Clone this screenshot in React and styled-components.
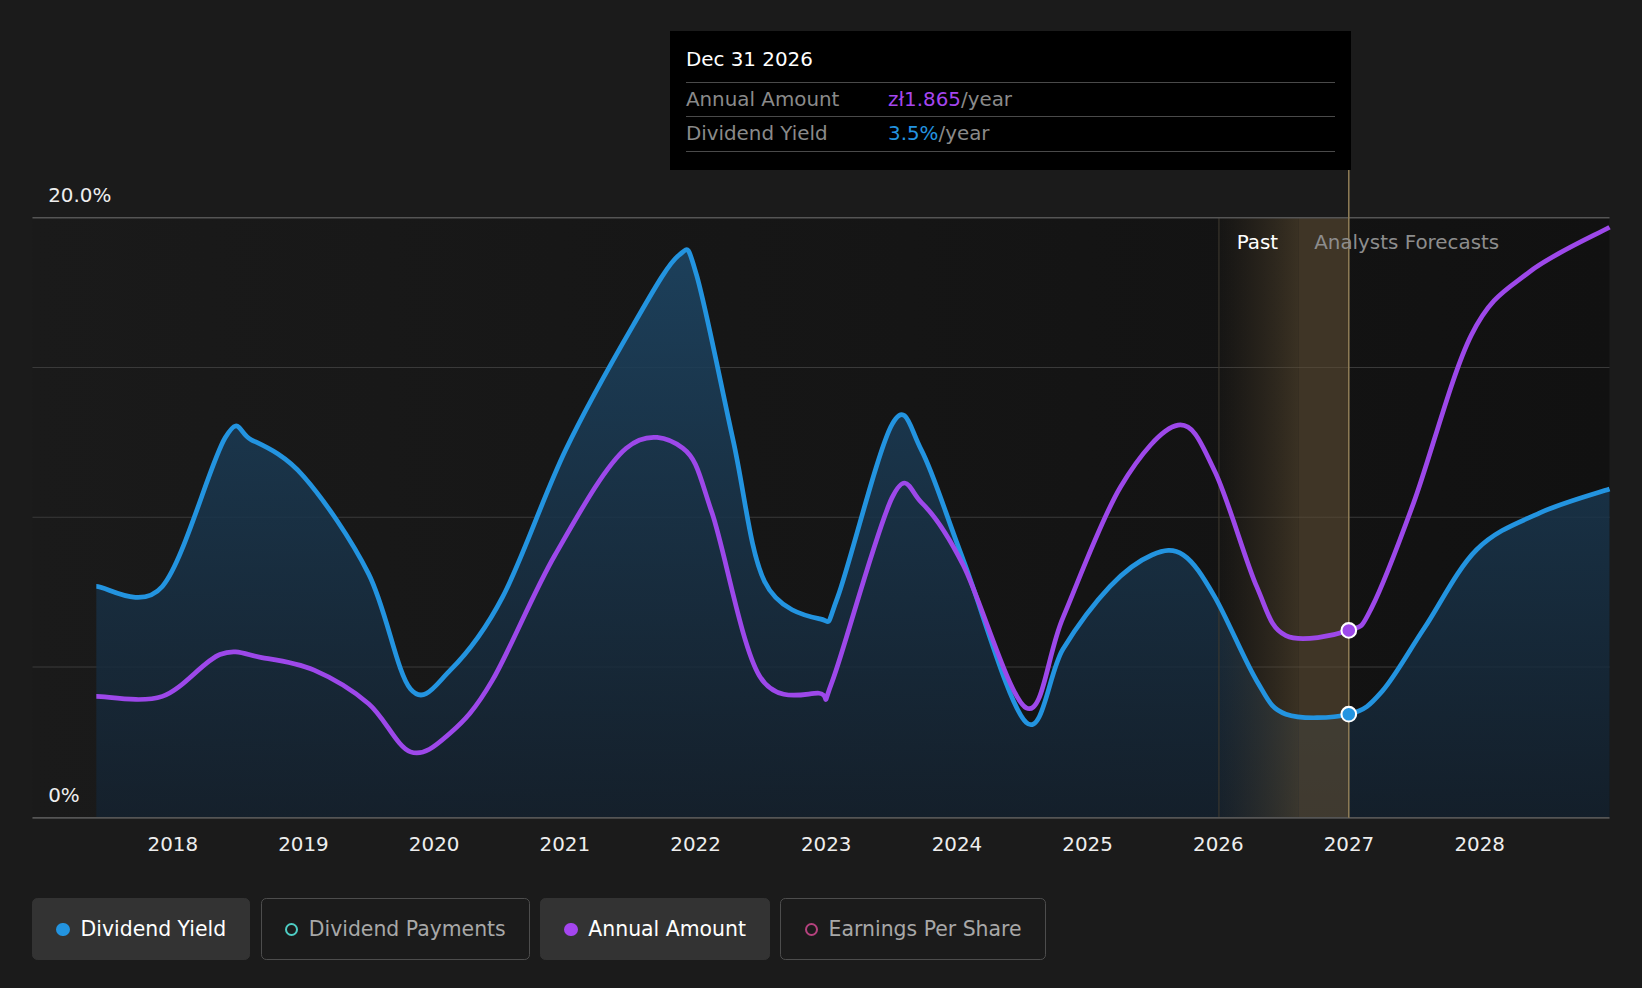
import React from "react";
import styled, { createGlobalStyle } from "styled-components";

const Global = createGlobalStyle`
  html, body { margin: 0; background: #1b1b1b; }
  body { font-family: "DejaVu Sans", "Noto Sans", sans-serif; overflow: hidden; }
`;

const Page = styled.div`
  width: 1568px;
  height: 943px;
  zoom: 1.04719;
  position: relative;
  background: #1b1b1b;
  display: flex;
  flex-direction: column;
`;

const ChartArea = styled.div`
  height: 830px;
  position: relative;
`;

const Tooltip = styled.div`
  position: absolute;
  left: 640px;
  top: 30px;
  width: 650px;
  height: 132px;
  background: #000;
  padding: 16px 15px 0;
  box-sizing: border-box;
  font-size: 19px;
`;

const TipDate = styled.div`
  color: #fff;
  height: 32px;
  border-bottom: 1px solid #4a4a4a;
`;

const TipRow = styled.div`
  display: flex;
  height: 32px;
  align-items: center;
  border-bottom: 1px solid #4a4a4a;
  color: #8a8a8a;
`;

const TipLabel = styled.span`
  width: 193px;
`;

const Val = styled.span`
  color: ${(p) => p.c};
`;

const Legend = styled.div`
  display: flex;
  gap: 10px;
  padding: 28px 31px 0;
`;

const Chip = styled.div`
  height: 59px;
  box-sizing: border-box;
  padding: 0 22px 0 22px;
  display: flex;
  align-items: center;
  gap: 10px;
  border-radius: 5px;
  font-size: 19.5px;
  background: ${(p) => (p.active ? "#333333" : "transparent")};
  border: 1.5px solid ${(p) => (p.active ? "#333333" : "#4d4d4d")};
  color: ${(p) => (p.active ? "#ffffff" : "#a8a8a8")};
`;

const Dot = styled.span`
  width: 13px;
  height: 13px;
  border-radius: 50%;
  box-sizing: border-box;
  background: ${(p) => (p.filled ? p.c : "transparent")};
  border: 2px solid ${(p) => p.c};
`;

function smooth(pts) {
  let d = `M${pts[0][0]},${pts[0][1]}`;
  for (let i = 0; i < pts.length - 1; i++) {
    const p0 = pts[i - 1] || pts[i];
    const p1 = pts[i];
    const p2 = pts[i + 1];
    const p3 = pts[i + 2] || p2;
    const t = 6;
    const c1 = [p1[0] + (p2[0] - p0[0]) / t, p1[1] + (p2[1] - p0[1]) / t];
    const c2 = [p2[0] - (p3[0] - p1[0]) / t, p2[1] - (p3[1] - p1[1]) / t];
    d += ` C${c1[0]},${c1[1]} ${c2[0]},${c2[1]} ${p2[0]},${p2[1]}`;
  }
  return d;
}

const blue = [
  [92, 560], [155, 560], [215, 418], [240, 420], [290, 455], [352, 548], [392, 658], [430, 640],
  [480, 570], [540, 430], [605, 310], [648, 244], [665, 262], [700, 420], [730, 555], [783, 591],
  [800, 570], [852, 405], [880, 430], [920, 535], [980, 690], [1015, 620], [1060, 560], [1100, 530],
  [1130, 530], [1160, 570], [1200, 650], [1228, 682], [1288, 682], [1320, 660], [1360, 600],
  [1410, 525], [1470, 490], [1537, 467],
];
const purple = [
  [92, 665], [155, 665], [210, 625], [250, 628], [300, 640], [352, 672], [392, 718], [430, 700],
  [470, 650], [530, 530], [598, 428], [652, 428], [680, 490], [725, 645], [782, 662], [795, 650],
  [852, 475], [880, 480], [920, 540], [980, 676], [1015, 590], [1070, 465], [1125, 406], [1160, 450],
  [1200, 560], [1228, 607], [1288, 602], [1310, 580], [1350, 480], [1405, 320], [1460, 260], [1537, 217],
];

const years = [2018, 2019, 2020, 2021, 2022, 2023, 2024, 2025, 2026, 2027, 2028];

function Chart() {
  const bd = smooth(blue);
  return (
    <svg width="1568" height="830" style={{ display: "block" }}>
      <defs>
        <linearGradient id="plot" x1="0" x2="1" y1="0" y2="0">
          <stop offset="0" stopColor="#1a1a1a" />
          <stop offset="1" stopColor="#111111" />
        </linearGradient>
        <linearGradient id="fill" x1="0" x2="0" y1="0" y2="1">
          <stop offset="0" stopColor="#1d4462" stopOpacity="0.9" />
          <stop offset="1" stopColor="#142230" stopOpacity="0.8" />
        </linearGradient>
        <linearGradient id="past" x1="0" x2="1" y1="0" y2="0">
          <stop offset="0" stopColor="#4a3c28" stopOpacity="0.05" />
          <stop offset="1" stopColor="#5a4a30" stopOpacity="0.55" />
        </linearGradient>
      </defs>
      <rect x="31" y="208" width="1506" height="573" fill="url(#plot)" />
      {[351, 494, 637].map((y) => (
        <line key={y} x1="31" x2="1537" y1={y} y2={y} stroke="#3a3a3a" strokeWidth="1" />
      ))}
      <path d={`${bd} L1537,781 L92,781 Z`} fill="url(#fill)" />
      <rect x="1164" y="208" width="76" height="573" fill="url(#past)" />
      <rect x="1240" y="208" width="48" height="573" fill="#5e4c33" fillOpacity="0.6" />
      <line x1="1164" x2="1164" y1="208" y2="781" stroke="#3e3a30" />
      <line x1="31" x2="1537" y1="208" y2="208" stroke="#555" strokeWidth="1.5" />
      <line x1="31" x2="1537" y1="781" y2="781" stroke="#555" strokeWidth="1.5" />
      <line x1="1288" x2="1288" y1="162" y2="781" stroke="#8c7a55" strokeWidth="1.5" />
      <path d={bd} fill="none" stroke="#2394e0" strokeWidth="4.5" />
      <path d={smooth(purple)} fill="none" stroke="#9d48ea" strokeWidth="4.5" />
      <circle cx="1288" cy="682" r="7" fill="#2394e0" stroke="#fff" strokeWidth="2" />
      <circle cx="1288" cy="602" r="7" fill="#9d48ea" stroke="#fff" strokeWidth="2" />
      <g fontFamily="DejaVu Sans, sans-serif" fontSize="19">
        <text x="46" y="193" fill="#eee">20.0%</text>
        <text x="46" y="766" fill="#eee">0%</text>
        <text x="1181" y="238" fill="#fff">Past</text>
        <text x="1255" y="238" fill="#8d8d8d">Analysts Forecasts</text>
        {years.map((y, i) => (
          <text key={y} x={165 + i * 124.8} y="813" fill="#eee" textAnchor="middle">{y}</text>
        ))}
      </g>
    </svg>
  );
}

export default function App() {
  return (
    <Page>
      <Global />
      <ChartArea>
        <Chart />
        <Tooltip>
          <TipDate>Dec 31 2026</TipDate>
          <TipRow>
            <TipLabel>Annual Amount</TipLabel>
            <Val c="#a546ef">zł1.865</Val>/year
          </TipRow>
          <TipRow>
            <TipLabel>Dividend Yield</TipLabel>
            <Val c="#2394e0">3.5%</Val>/year
          </TipRow>
        </Tooltip>
      </ChartArea>
      <Legend>
        <Chip active><Dot filled c="#2394e0" />Dividend Yield</Chip>
        <Chip><Dot c="#4ecdc4" />Dividend Payments</Chip>
        <Chip active><Dot filled c="#a546ef" />Annual Amount</Chip>
        <Chip><Dot c="#b5427e" />Earnings Per Share</Chip>
      </Legend>
    </Page>
  );
}
